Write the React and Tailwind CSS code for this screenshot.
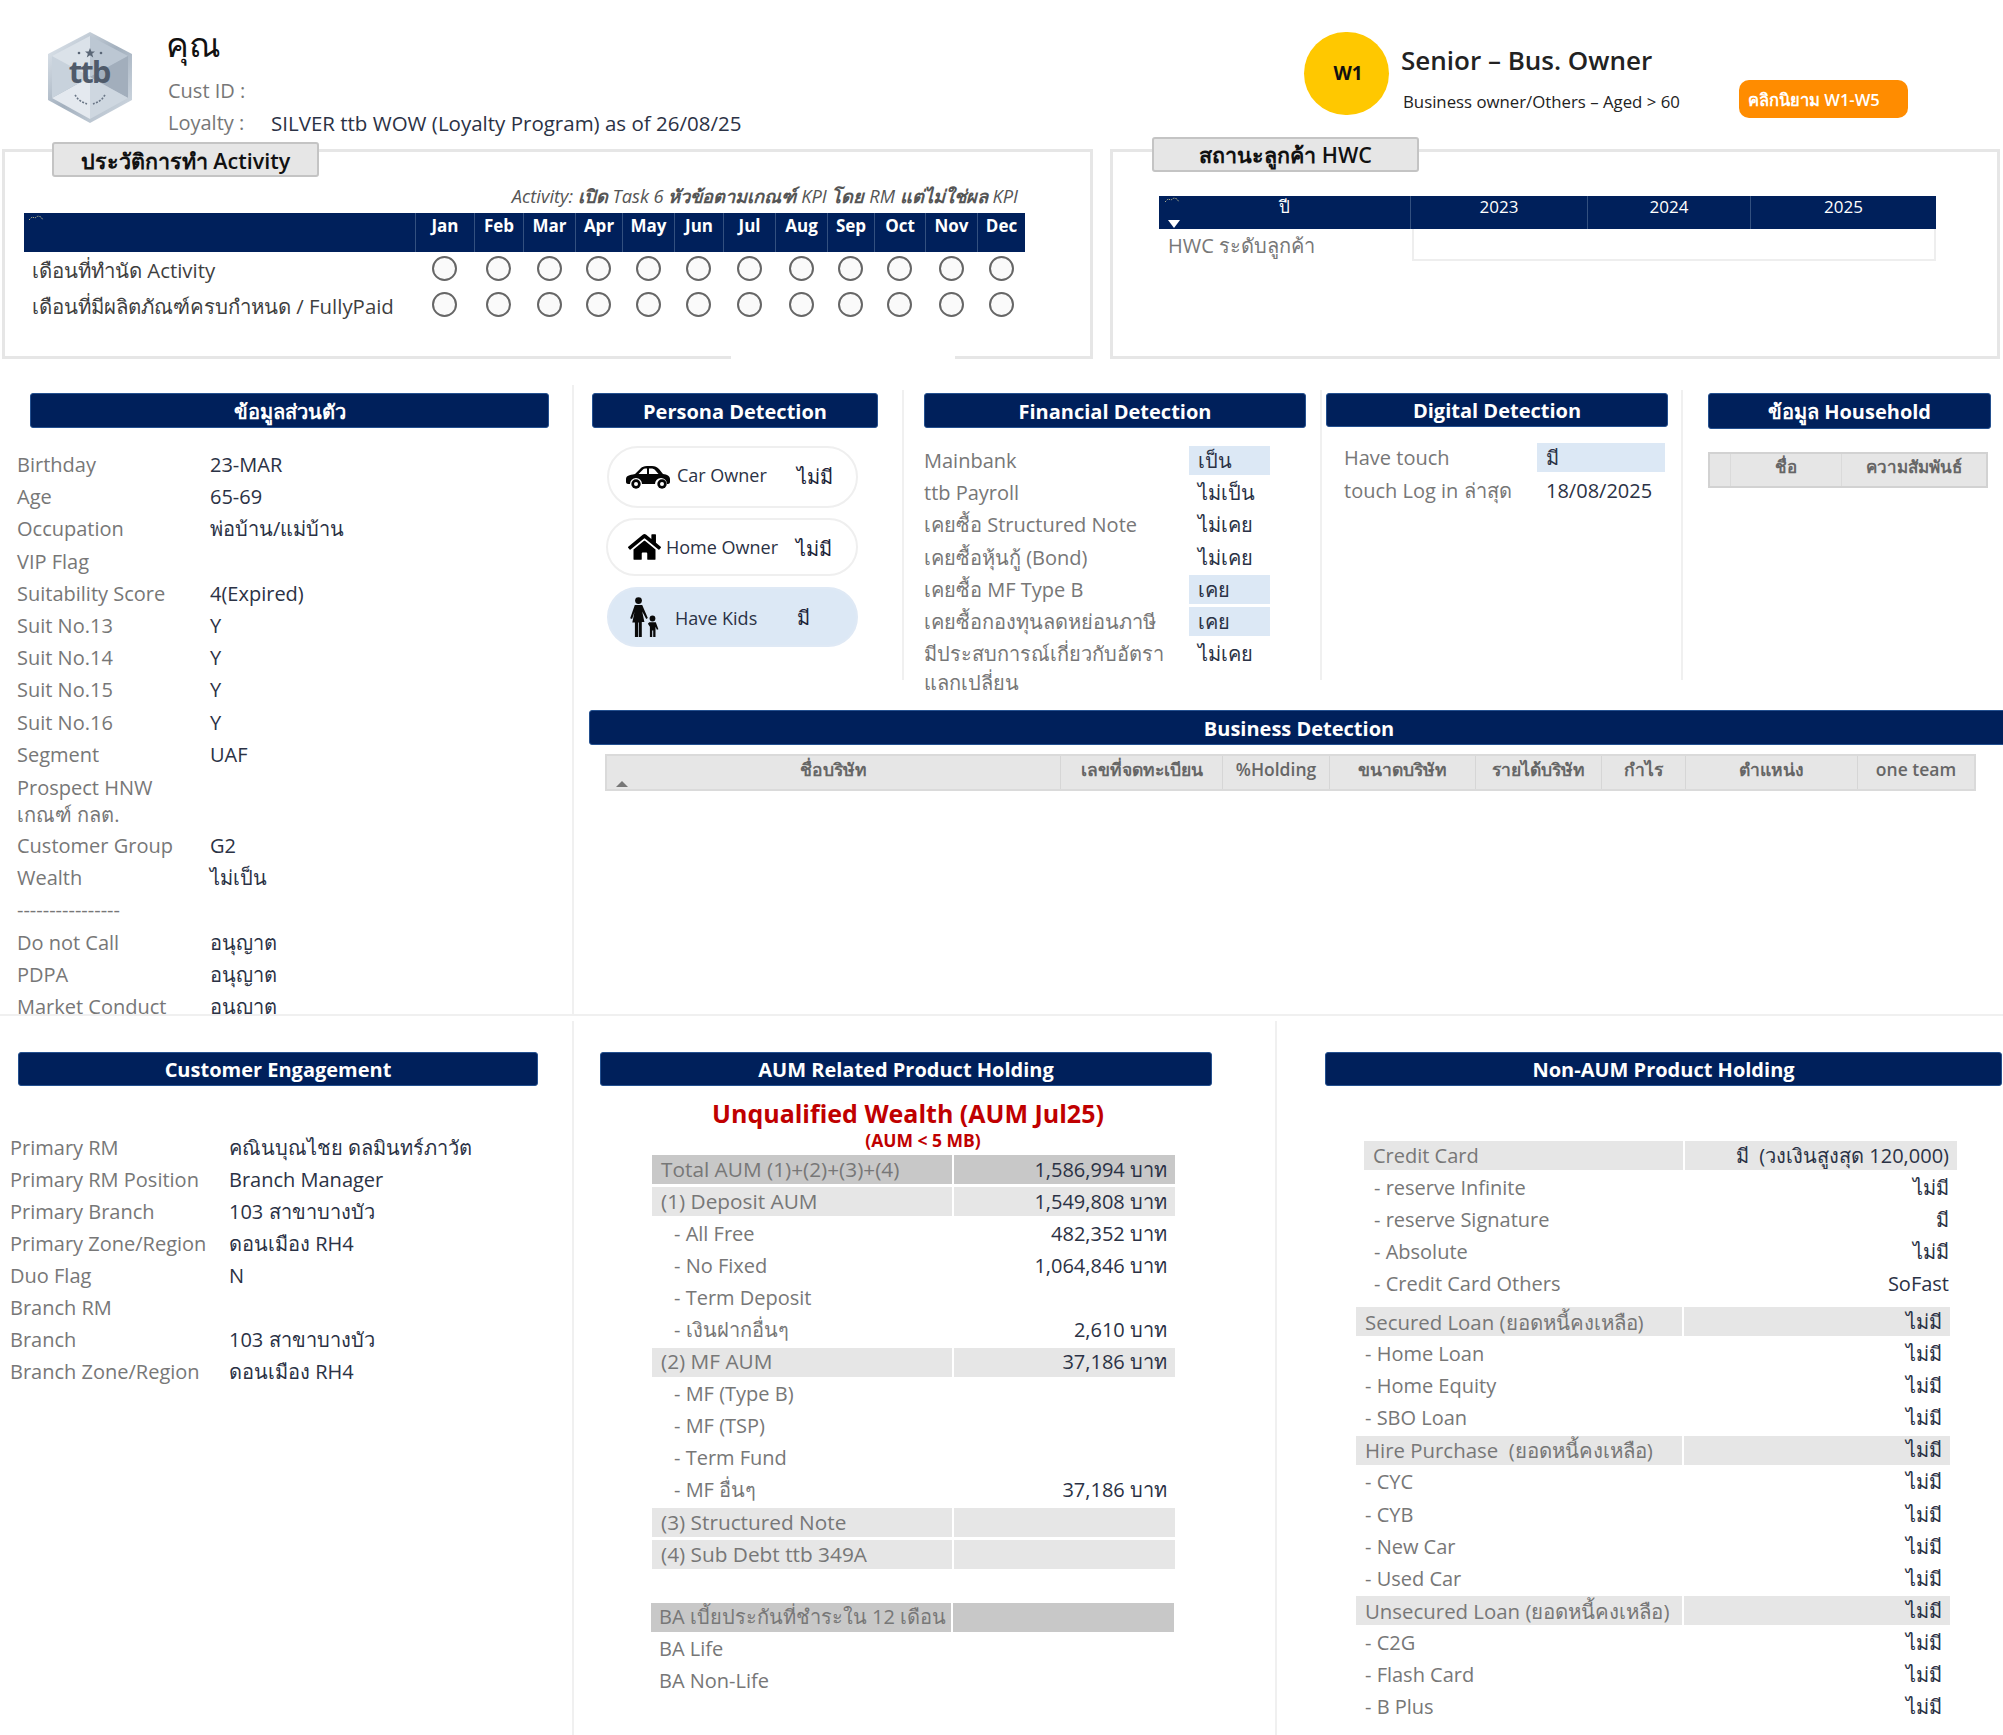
import React from 'react';
import { FaHome } from 'react-icons/fa';

const months = ['Jan', 'Feb', 'Mar', 'Apr', 'May', 'Jun', 'Jul', 'Aug', 'Sep', 'Oct', 'Nov', 'Dec'];

const personal = [
  ['Birthday', '23-MAR'],
  ['Age', '65-69'],
  ['Occupation', 'พ่อบ้าน/แม่บ้าน'],
  ['VIP Flag', ''],
  ['Suitability Score', '4(Expired)'],
  ['Suit No.13', 'Y'],
  ['Suit No.14', 'Y'],
  ['Suit No.15', 'Y'],
  ['Suit No.16', 'Y'],
  ['Segment', 'UAF'],
];

const personalRest = [
  ['Customer Group', 'G2'],
  ['Wealth', 'ไม่เป็น'],
  ['----------------', ''],
  ['Do not Call', 'อนุญาต'],
  ['PDPA', 'อนุญาต'],
  ['Market Conduct', 'อนุญาต'],
];

const financial = [
  ['Mainbank', 'เป็น', true],
  ['ttb Payroll', 'ไม่เป็น', false],
  ['เคยซื้อ Structured Note', 'ไม่เคย', false],
  ['เคยซื้อหุ้นกู้ (Bond)', 'ไม่เคย', false],
  ['เคยซื้อ MF Type B', 'เคย', true],
  ['เคยซื้อกองทุนลดหย่อนภาษี', 'เคย', true],
  ['มีประสบการณ์เกี่ยวกับอัตราแลกเปลี่ยน', 'ไม่เคย', false],
];

const engagement = [
  ['Primary RM', 'คณินบุณไชย ดลมินทร์ภาวัต'],
  ['Primary RM Position', 'Branch Manager'],
  ['Primary Branch', '103 สาขาบางบัว'],
  ['Primary Zone/Region', 'ดอนเมือง RH4'],
  ['Duo Flag', 'N'],
  ['Branch RM', ''],
  ['Branch', '103 สาขาบางบัว'],
  ['Branch Zone/Region', 'ดอนเมือง RH4'],
];

const aum = [
  ['Total AUM (1)+(2)+(3)+(4)', '1,586,994 บาท', 'dark'],
  ['(1) Deposit AUM', '1,549,808 บาท', 'light'],
  ['- All Free', '482,352 บาท', 'sub'],
  ['- No Fixed', '1,064,846 บาท', 'sub'],
  ['- Term Deposit', '', 'sub'],
  ['- เงินฝากอื่นๆ', '2,610 บาท', 'sub'],
  ['(2) MF AUM', '37,186 บาท', 'light'],
  ['- MF (Type B)', '', 'sub'],
  ['- MF (TSP)', '', 'sub'],
  ['- Term Fund', '', 'sub'],
  ['- MF อื่นๆ', '37,186 บาท', 'sub'],
  ['(3) Structured Note', '', 'light'],
  ['(4) Sub Debt ttb 349A', '', 'light'],
];

const loans = [
  ['Secured Loan (ยอดหนี้คงเหลือ)', true],
  ['- Home Loan'],
  ['- Home Equity'],
  ['- SBO Loan'],
  ['Hire Purchase  (ยอดหนี้คงเหลือ)', true],
  ['- CYC'],
  ['- CYB'],
  ['- New Car'],
  ['- Used Car'],
  ['Unsecured Loan (ยอดหนี้คงเหลือ)', true],
  ['- C2G'],
  ['- Flash Card'],
  ['- B Plus'],
];

const business = ['ชื่อบริษัท', 'เลขที่จดทะเบียน', '%Holding', 'ขนาดบริษัท', 'รายได้บริษัท', 'กำไร', 'ตำแหน่ง', 'one team'];

const Title = ({ className, children }) => (
  <div className={`flex items-center justify-center pt-[2px] bg-[#00205b] border border-[#24508f] rounded-[3px] text-white font-bold text-[20px] ${className}`}>
    {children}
  </div>
);

const Tab = ({ className, children }) => (
  <div className={`absolute flex items-center justify-center w-[267px] h-[35px] bg-[#e6e6e6] border-2 border-[#c4c4c4] rounded-[3px] text-[#111] font-semibold text-[21.5px] ${className}`}>
    {children}
  </div>
);

// little drill-mark that sits in the corner of the table headers
const CornerMark = ({ className }) => (
  <svg viewBox="0 0 16 6" className={`absolute w-[16px] h-[6px] ${className}`}>
    <path d="M1 5l3-3 3 1 3-2 3 1 2 3" fill="none" stroke="#a8a888" strokeWidth="1" strokeDasharray="1.5 1" />
  </svg>
);

const Circles = () => (
  <div className="grid grid-cols-[391px_59px_49px_52px_47px_52px_49px_52px_52px_47px_51px_52px_48px] h-[36px] items-center">
    <div />
    {months.map((m) => (
      <div key={m} className="flex justify-center">
        <div className="w-[25px] h-[25px] rounded-full border-2 border-[#666] bg-[#fafafa]" />
      </div>
    ))}
  </div>
);

const Logo = () => (
  <svg viewBox="0 0 84 91" className="w-[84px] h-[91px] shrink-0">
    <defs>
      <linearGradient id="rim" x1="0" y1="0" x2="1" y2="1">
        <stop offset="0" stopColor="#e6ecf2" />
        <stop offset="0.5" stopColor="#a3b0be" />
        <stop offset="1" stopColor="#d6dee6" />
      </linearGradient>
    </defs>
    <polygon points="42,0 84,22 84,68 42,91 0,68 0,22" fill="url(#rim)" />
    <polygon points="42,4 80,24 42,45" fill="#bcc7d3" />
    <polygon points="80,24 80,66 42,45" fill="#a2aebc" />
    <polygon points="80,66 42,87 42,45" fill="#ced7e0" />
    <polygon points="42,87 4,66 42,45" fill="#e4e9ef" />
    <polygon points="4,66 4,24 42,45" fill="#c8d2dc" />
    <polygon points="4,24 42,4 42,45" fill="#dbe2e9" />
    <circle cx="31" cy="21" r="1.3" fill="#5a6676" />
    <polygon points="42,16 43.4,19.6 47,19.6 44.2,21.8 45.2,25.4 42,23.2 38.8,25.4 39.8,21.8 37,19.6 40.6,19.6" fill="#5a6676" />
    <circle cx="53" cy="21" r="1.3" fill="#5a6676" />
    <text x="41" y="51" textAnchor="middle" fontSize="31" fontWeight="700" fill="#4f5a6a" letterSpacing="-2" fontFamily="Open Sans">ttb</text>
    <path d="M27 63l3 4 4 3 5 2M57 63l-3 4-4 3-5 2" fill="none" stroke="#6a7686" strokeWidth="1.6" strokeDasharray="2 1.4" />
  </svg>
);

const Car = () => (
  <svg viewBox="0 0 46 24" className="ml-[16px] mr-[6px] w-[46px] h-[24px] shrink-0" fill="#050505">
    <path d="M1 14c0-3 3-4 9-5l6-6c1-1 3-2 6-2h5c3 0 5 1 7 3l4 5c4 .5 7 2 7 5v3c0 1-1 2-2 2h-1a6 6 0 0 0-12 0H17a6 6 0 0 0-12 0H3c-1 0-2-1-2-2z" />
    <path d="M18 4.5L13.5 9h8.5V3.500h-1c-1.500 0-2.300.3-3 1zM24 3.500V9h9.500l-3.500-4c-1-1-2-1.500-4-1.500z" fill="#fff" />
    <circle cx="11" cy="19" r="4.700" />
    <circle cx="11" cy="19" r="2" fill="#fff" />
    <circle cx="37" cy="19" r="4.700" />
    <circle cx="37" cy="19" r="2" fill="#fff" />
  </svg>
);

const Kids = () => (
  <svg viewBox="0 0 30 40" className="w-[30px] h-[40px] shrink-0" fill="#0a0a0a">
    <circle cx="9.5" cy="3.600" r="3.400" />
    <path d="M5.800 8h7.400l5.600 13-1.600 1-4-7.500 2.200 10.500h-2.600V40h-3.100V25.500H9V40H5.900V25.500H3.300l2.200-10.500-2.400 7-1.900-.8z" />
    <circle cx="23.500" cy="21.500" r="2.900" />
    <path d="M20.200 25.200h6.600l2.600 7-1.500.6-1.400-3V40h-2.300v-6.600h-1V40h-2.300V29.800l-2-3z" />
  </svg>
);

const Pill = ({ className, icon, label, labelClass, value, valueClass }) => (
  <div className={`relative flex items-center rounded-[32px] border-2 ${className}`}>
    {icon}
    <span className={`text-[#2b3245] text-[18px] ${labelClass}`}>{label}</span>
    <span className={`absolute left-[188px] text-[#1c2438] text-[20px] ${valueClass}`}>{value}</span>
  </div>
);

const ProductRow = ({ label, value, kind, indent, labelSize = 'text-[20px]', left = 'w-[319px]' }) => {
  const bg = kind === 'dark' ? 'bg-[#c8c8c8]' : kind === 'light' ? 'bg-[#e6e6e6]' : '';
  return (
    <div className="flex gap-x-[2px] h-[32.1px]">
      <div className={`${left} h-[29px] shrink-0 flex items-center text-[#777] ${labelSize} ${indent} ${bg}`}>
        <span className="whitespace-pre">{label}</span>
      </div>
      <div className={`flex-1 h-[29px] flex items-center justify-end pr-[8px] text-[#2b3245] ${bg}`}>
        <span className="whitespace-pre">{value}</span>
      </div>
    </div>
  );
};

export default function App() {
  return (
    <div className="w-[2003px] h-[1735px] overflow-hidden bg-white text-[20px] font-['Open_Sans','Noto_Sans',sans-serif]">
      {/* header */}
      <div className="flex h-[149px]">
        <div className="ml-[48px] mt-[32px]">
          <Logo />
        </div>
        <div className="ml-[34px] w-[1000px] mt-[18px]">
          <div className="text-[34px] leading-[52px] font-medium text-[#111]">คุณ</div>
          <div className="ml-[2px] mt-[5px] h-[32px] leading-[32px] text-[#777]">Cust ID :</div>
          <div className="ml-[2px] flex h-[32px] leading-[32px]">
            <span className="w-[103px] text-[#777]">Loyalty :</span>
            <span className="text-[#2b3245] text-[20.5px]">SILVER ttb WOW (Loyalty Program) as of 26/08/25</span>
          </div>
        </div>
        <div className="ml-[138px] mt-[32px] w-[85px] h-[83px] pl-[3px] rounded-full bg-[#ffc800] flex items-center justify-center font-bold text-[19px] text-[#111] shrink-0">
          W1
        </div>
        <div className="ml-[12px] mt-[41px] w-[338px] shrink-0">
          <div className="text-[26px] leading-[38px] font-semibold text-[#222]">Senior – Bus. Owner</div>
          <div className="ml-[2px] mt-[11px] text-[16.800px] leading-[24px] text-[#222]">Business owner/Others – Aged &gt; 60</div>
        </div>
        <div className="mt-[80px] w-[169px] h-[38px] pt-[3px] rounded-[10px] bg-[#ff8c00] flex items-center pl-[9px] text-white font-semibold text-[16.500px] shrink-0">
          คลิกนิยาม W1-W5
        </div>
      </div>

      {/* activity + hwc frames */}
      <div className="flex h-[236px]">
        <div className="relative ml-[2px] w-[1091px] h-[210px] border-[3px] border-[#e6e6e6] shrink-0">
          <Tab className="-top-[10px] left-[47px] pt-[3px]">ประวัติการทำ Activity</Tab>
          <div className="absolute -bottom-[3px] left-[726px] w-[224px] h-[3px] bg-white" />
          <div className="mt-[30px] pr-[72px] h-[28px] leading-[28px] text-right text-[18.300px] italic text-[#555]">
            Activity: <b>เปิด</b> Task 6 <b>หัวข้อตามเกณฑ์</b> KPI <b>โดย</b> RM <b>แต่ไม่ใช่ผล</b> KPI
          </div>
          <div className="ml-[19px] w-[1001px] mt-[3px]">
            <div className="relative grid grid-cols-[391px_59px_49px_52px_47px_52px_49px_52px_52px_47px_51px_52px_48px] h-[39px] bg-[#00205b] text-white font-bold text-[17px] leading-[26px]">
              <CornerMark className="left-[4px] top-[2px]" />
              <div />
              {months.map((m) => (
                <div key={m} className="text-center border-l border-[#33507f]">{m}</div>
              ))}
            </div>
            <div className="relative -mt-[2px]">
              <Circles />
              <Circles />
              <div className="absolute left-[8px] top-[2px] h-[36px] leading-[36px] text-[#3f3f3f] text-[20.400px]">เดือนที่ทำนัด Activity</div>
              <div className="absolute left-[8px] top-[38px] h-[36px] leading-[36px] text-[#3f3f3f] text-[20.400px]">เดือนที่มีผลิตภัณฑ์ครบกำหนด / FullyPaid</div>
            </div>
          </div>
        </div>
        <div className="relative ml-[17px] w-[890px] h-[210px] border-[3px] border-[#e6e6e6] shrink-0">
          <Tab className="-top-[15px] left-[39px] pt-[2px]">สถานะลูกค้า HWC</Tab>
          <div className="ml-[46px] mt-[44px] w-[777px]">
            <div className="relative grid grid-cols-[251px_177px_163px_186px] h-[33px] bg-[#00205b] text-white text-[17px] leading-[22px]">
              <CornerMark className="left-[5px] top-[1px]" />
              <svg viewBox="0 0 12 8" className="absolute left-[9px] top-[24px] w-[12px] h-[8px]">
                <path d="M0 0h12L6 8z" fill="#fff" />
              </svg>
              <div className="text-center font-medium">ปี</div>
              <div className="text-center border-l border-[#33507f]">2023</div>
              <div className="text-center border-l border-[#33507f]">2024</div>
              <div className="text-center border-l border-[#33507f]">2025</div>
            </div>
            <div className="flex h-[32px]">
              <div className="w-[253px] pl-[9px] leading-[34px] text-[#777]">HWC ระดับลูกค้า</div>
              <div className="flex-1 border-2 border-t-0 border-[#eeeeee]" />
            </div>
          </div>
        </div>
      </div>

      {/* middle section */}
      <div className="flex h-[631px] border-b-2 border-[#f0f0f0]">
        <div className="w-[574px] shrink-0 border-r-2 border-[#f0f0f0] overflow-hidden">
          <Title className="mt-[8px] ml-[30px] w-[519px] h-[35px]">ข้อมูลส่วนตัว</Title>
          <div className="mt-[21px] ml-[17px]">
            {personal.map(([k, v]) => (
              <div key={k} className="flex h-[32.200px] items-center">
                <span className="w-[193px] text-[#777]">{k}</span>
                <span className="text-[#2b3245]">{v}</span>
              </div>
            ))}
            <div className="h-[59px] pt-[3px] leading-[27.500px] text-[#777]">
              Prospect HNW
              <br />
              เกณฑ์ กลต.
            </div>
            {personalRest.map(([k, v]) => (
              <div key={k} className="flex h-[32.200px] items-center">
                <span className="w-[193px] text-[#777]">{k}</span>
                <span className="text-[#2b3245]">{v}</span>
              </div>
            ))}
          </div>
        </div>

        <div className="flex-1 min-w-0">
          <div className="flex mt-[5px] h-[290px]">
            <div className="w-[330px] shrink-0 border-r-2 border-[#f0f0f0]">
              <Title className="mt-[3px] ml-[18px] w-[286px] h-[35px]">Persona Detection</Title>
              <Pill className="mt-[18px] ml-[33px] w-[251px] h-[62px] border-[#efefef]" icon={<Car />} label="Car Owner" labelClass="pb-[4px]" value="ไม่มี" />
              <Pill className="mt-[10px] ml-[32px] w-[252px] h-[58px] border-[#efefef]" icon={<FaHome className="ml-[20px] mr-[5px] w-[33px] h-[30px] text-black" />} label="Home Owner" labelClass="pt-[1px]" value="ไม่มี" valueClass="pt-[3px]" />
              <Pill className="mt-[11px] ml-[33px] w-[251px] h-[60px] bg-[#dce8f5] border-[#dfe9f5]" icon={<span className="ml-[20px] mr-[16px]"><Kids /></span>} label="Have Kids" labelClass="pt-[2px]" value="มี" valueClass="pt-[1px]" />
            </div>
            <div className="w-[418px] shrink-0 border-r-2 border-[#f0f0f0]">
              <Title className="mt-[3px] ml-[20px] w-[382px] h-[35px]">Financial Detection</Title>
              <div className="mt-[18px] ml-[20px]">
                {financial.map(([k, v, hi]) => (
                  <div key={k} className="flex h-[32.200px]">
                    <span className="w-[265px] leading-[29px] text-[#777]">{k}</span>
                    <span className={`w-[81px] h-[29px] pl-[9px] leading-[29px] text-[#2b3245] ${hi ? 'bg-[#dce8f5]' : ''}`}>{v}</span>
                  </div>
                ))}
              </div>
            </div>
            <div className="w-[361px] shrink-0 border-r-2 border-[#f0f0f0]">
              <Title className="mt-[3px] ml-[4px] w-[342px] h-[34px]">Digital Detection</Title>
              <div className="mt-[16px] ml-[22px]">
                <div className="flex h-[32.500px]">
                  <span className="w-[193px] leading-[29px] text-[#777]">Have touch</span>
                  <span className="w-[128px] h-[29px] pl-[9px] leading-[29px] bg-[#dce8f5] text-[#2b3245]">มี</span>
                </div>
                <div className="flex h-[32.500px]">
                  <span className="w-[193px] leading-[29px] text-[#777]">touch Log in ล่าสุด</span>
                  <span className="pl-[9px] leading-[29px] text-[#2b3245]">18/08/2025</span>
                </div>
              </div>
            </div>
            <div className="flex-1 min-w-0">
              <Title className="mt-[3px] ml-[25px] w-[283px] h-[36px]">ข้อมูล Household</Title>
              <div className="ml-[25px] mt-[23px] w-[280px] h-[36px] bg-[#e6e6e6] border-2 border-[#d2d2d2] grid grid-cols-[20px_111px_1fr] text-[#666] font-semibold text-[17px] leading-[26px] text-center">
                <div />
                <div className="border-l border-[#dadada]">ชื่อ</div>
                <div className="border-l border-[#dadada]">ความสัมพันธ์</div>
              </div>
            </div>
          </div>
          <Title className="mt-[30px] ml-[15px] w-[1420px] h-[35px]">Business Detection</Title>
          <div className="relative ml-[31px] mt-[9px] w-[1371px] h-[37px] bg-[#e6e6e6] border-2 border-[#dadada] grid grid-cols-[453px_162px_107px_146px_126px_84px_172px_1fr] text-[#666] font-semibold text-[17.500px] leading-[26px] text-center">
            {business.map((b, i) => (
              <div key={b} className={i > 0 ? 'border-l border-[#d6d6d6]' : ''}>{b}</div>
            ))}
            <svg viewBox="0 0 12 6" className="absolute left-[9px] bottom-[2px] w-[12px] h-[6px]">
              <path d="M6 0l6 6H0z" fill="#777" />
            </svg>
          </div>
        </div>
      </div>

      {/* bottom section */}
      <div className="flex h-[718px] mt-[5px]">
        <div className="w-[574px] shrink-0 border-r-2 border-[#f0f0f0]">
          <Title className="mt-[31px] ml-[18px] w-[520px] h-[34px]">Customer Engagement</Title>
          <div className="mt-[45.500px] ml-[10px]">
            {engagement.map(([k, v]) => (
              <div key={k} className="flex h-[32px] items-center">
                <span className="w-[219px] text-[#777]">{k}</span>
                <span className="text-[#2b3245]">{v}</span>
              </div>
            ))}
          </div>
        </div>

        <div className="w-[703px] shrink-0 border-r-2 border-[#f0f0f0]">
          <Title className="mt-[31px] ml-[26px] w-[612px] h-[34px]">AUM Related Product Holding</Title>
          <div className="ml-[26px] w-[612px] mt-[10px] pl-[4px] text-center text-[25px] leading-[34px] font-bold text-[#c00000]">Unqualified Wealth (AUM Jul25)</div>
          <div className="ml-[26px] w-[612px] pl-[34px] text-center text-[17.500px] leading-[20px] font-bold text-[#c00000]">(AUM &lt; 5 MB)</div>
          <div className="ml-[78px] w-[523px] mt-[5px]">
            {aum.map(([k, v, kind]) => (
              <ProductRow
                key={k}
                label={k}
                value={v}
                kind={kind === 'sub' ? '' : kind}
                left="w-[300px]"
                labelSize={kind === 'sub' ? 'text-[20px]' : 'text-[20.800px]'}
                indent={kind === 'sub' ? 'pl-[22px]' : 'pl-[9px]'}
              />
            ))}
          </div>
          <div className="ml-[77px] w-[523px] mt-[30.500px]">
            <ProductRow label="BA เบี้ยประกันที่ชำระใน 12 เดือน" value="" kind="dark" left="w-[300px]" indent="pl-[8px]" />
            <ProductRow label="BA Life" value="" left="w-[300px]" indent="pl-[8px]" />
            <ProductRow label="BA Non-Life" value="" left="w-[300px]" indent="pl-[8px]" />
          </div>
        </div>

        <div className="flex-1 min-w-0">
          <Title className="mt-[31px] ml-[48px] w-[677px] h-[34px]">Non-AUM Product Holding</Title>
          <div className="ml-[87px] w-[593px] mt-[55px]">
            <ProductRow label="Credit Card" value="มี  (วงเงินสูงสุด 120,000)" kind="light" indent="pl-[9px]" />
            <ProductRow label="- reserve Infinite" value="ไม่มี" indent="pl-[10px]" />
            <ProductRow label="- reserve Signature" value="มี" indent="pl-[10px]" />
            <ProductRow label="- Absolute" value="ไม่มี" indent="pl-[10px]" />
            <ProductRow label="- Credit Card Others" value="SoFast" indent="pl-[10px]" />
          </div>
          <div className="ml-[79px] w-[594px] mt-[6px]">
            {loans.map(([label, group]) => (
              <ProductRow
                key={label}
                label={label}
                value="ไม่มี"
                kind={group ? 'light' : ''}
                left="w-[326px]"
                labelSize={group ? 'text-[20.400px]' : 'text-[20px]'}
                indent="pl-[9px]"
              />
            ))}
          </div>
        </div>
      </div>
    </div>
  );
}
